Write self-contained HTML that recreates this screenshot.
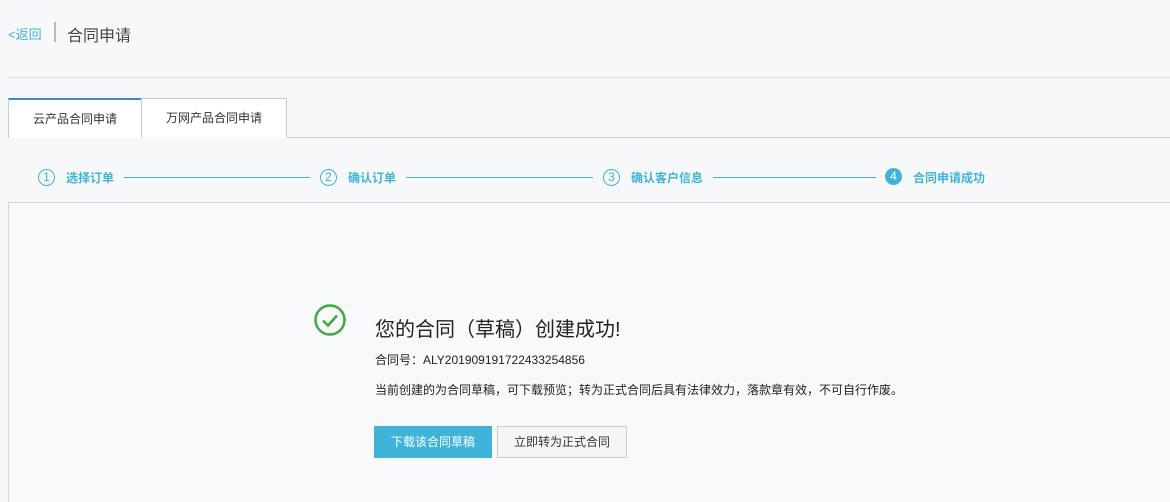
<!DOCTYPE html>
<html><head><meta charset="utf-8"><style>
*{margin:0;padding:0;box-sizing:border-box}
body{width:1170px;height:489px;background:#f7f8fa;font-family:"Liberation Sans","Noto Sans CJK SC",sans-serif;position:relative;overflow:hidden;color:#333}
.a{position:absolute;white-space:nowrap}
.c{position:absolute;width:17px;height:17px;border:1px solid #40b4d8;border-radius:50%;color:#40b4d8;font-size:12px;text-align:center;line-height:15px}
.st{position:absolute;font-size:12px;font-weight:bold;color:#40b4d8;top:169px}
.ln{position:absolute;height:1px;background:#40b4d8;top:177px}
</style></head><body>
<div class="a" style="left:8px;top:24px;font-size:13px;color:#40b4d8">&lt;返回</div>
<div class="a" style="left:54px;top:22px;width:2px;height:20px;background:#bbb"></div>
<div class="a" style="left:67px;top:22px;font-size:16px;color:#444">合同申请</div>
<div class="a" style="left:8px;top:77px;width:1162px;height:1px;background:#ddd"></div>
<div class="a" style="left:8px;top:98px;width:134px;height:40px;background:#fff;border:1px solid #ccc;border-top:2px solid #3a8ec6;border-bottom:none;font-size:12px;text-align:center;line-height:38px">云产品合同申请</div>
<div class="a" style="left:141px;top:98px;width:146px;height:39px;background:#fff;border:1px solid #ccc;border-bottom:none;font-size:12px;text-align:center;line-height:38px">万网产品合同申请</div>
<div class="a" style="left:287px;top:137px;width:883px;height:1px;background:#ccc"></div>
<div class="a" style="left:8px;top:137px;width:1px;height:1px;background:#ccc"></div>
<div class="c" style="left:38px;top:169px">1</div><div class="st" style="left:66px">选择订单</div><div class="ln" style="left:124px;width:186px"></div>
<div class="c" style="left:320px;top:169px">2</div><div class="st" style="left:348px">确认订单</div><div class="ln" style="left:406px;width:187px"></div>
<div class="c" style="left:603px;top:169px">3</div><div class="st" style="left:631px">确认客户信息</div><div class="ln" style="left:713px;width:163px"></div>
<div class="c" style="left:885px;top:168px;background:#40b4d8;color:#fff">4</div><div class="st" style="left:913px">合同申请成功</div>
<div class="a" style="left:8px;top:202px;width:1162px;height:300px;border-top:1px solid #d5d5d5;border-left:1px solid #d5d5d5;background:#f8f9fb"></div>
<svg class="a" style="left:313px;top:303px" width="34" height="34" viewBox="0 0 34 34"><circle cx="17" cy="17" r="14.5" fill="none" stroke="#3eaa3e" stroke-width="2.5"/><path d="M10 17.5l5 5 9-10" fill="none" stroke="#3eaa3e" stroke-width="2.5"/></svg>
<div class="a" style="left:375px;top:313px;font-size:20px;color:#222">您的合同（草稿）创建成功!</div>
<div class="a" style="left:375px;top:351px;font-size:12px;color:#222">合同号：ALY20190919172243325485​6</div>
<div class="a" style="left:375px;top:381px;font-size:12px;color:#222">当前创建的为合同草稿，可下载预览；转为正式合同后具有法律效力，落款章有效，不可自行作废。</div>
<div class="a" style="left:374px;top:426px;width:118px;height:32px;background:#40b4d8;color:#fff;font-size:12px;text-align:center;line-height:32px">下载该合同草稿</div>
<div class="a" style="left:497px;top:426px;width:130px;height:32px;background:#f5f5f5;border:1px solid #ccc;color:#333;font-size:12px;text-align:center;line-height:30px">立即转为正式合同</div>
</body></html>
